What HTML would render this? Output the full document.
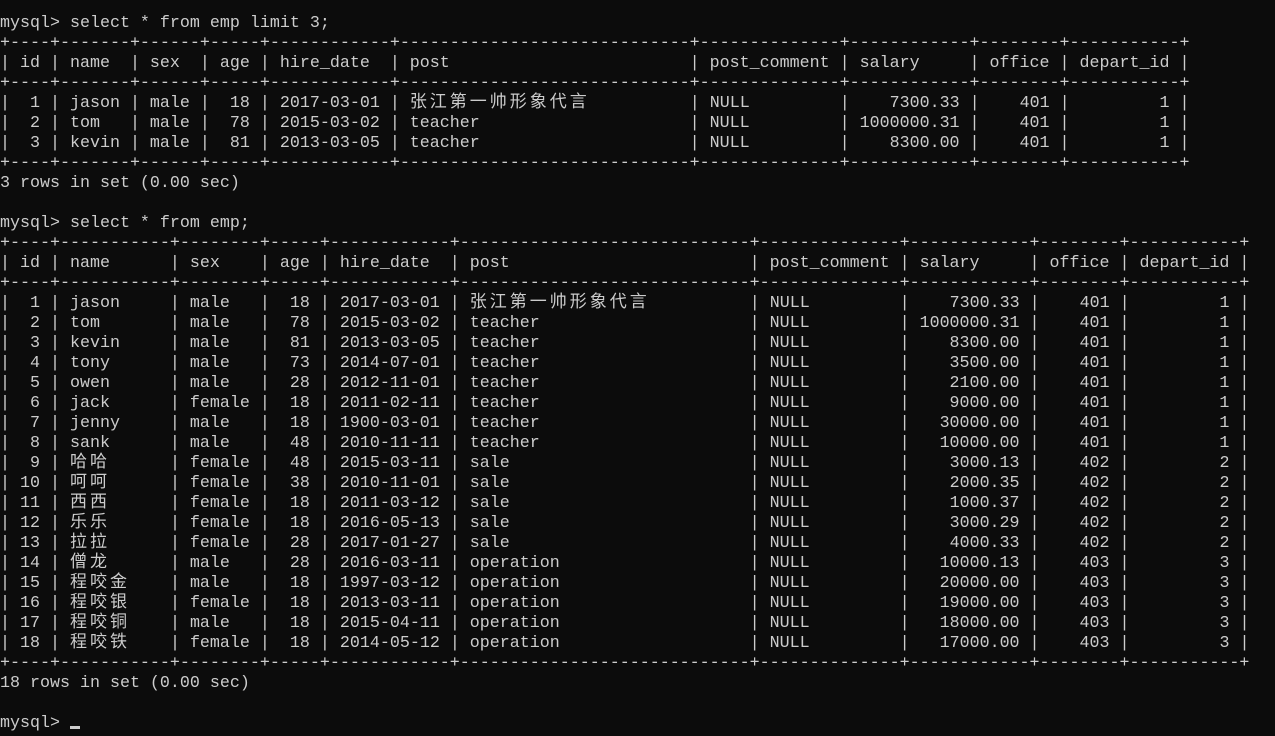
<!DOCTYPE html>
<html><head><meta charset="utf-8"><style>
html,body{margin:0;padding:0;background:#0c0c0c;width:1275px;height:736px;overflow:hidden}
pre{position:absolute;left:0;top:14px;margin:0;font-family:"Liberation Mono",monospace;font-size:16.67px;line-height:20px;color:#cccccc;white-space:pre}
.c{font-family:"Noto Sans CJK SC","WenQuanYi Zen Hei",sans-serif;font-size:17px;letter-spacing:3px;line-height:0;vertical-align:baseline}
#cur{position:absolute;left:70px;top:726px;width:10px;height:3px;background:#cccccc}
</style></head><body>
<pre>mysql&gt; select * from emp limit 3;
+----+-------+------+-----+------------+-----------------------------+--------------+------------+--------+-----------+
| id | name  | sex  | age | hire_date  | post                        | post_comment | salary     | office | depart_id |
+----+-------+------+-----+------------+-----------------------------+--------------+------------+--------+-----------+
|  1 | jason | male |  18 | 2017-03-01 | <span class="c">张江第一帅形象代言</span>          | NULL         |    7300.33 |    401 |         1 |
|  2 | tom   | male |  78 | 2015-03-02 | teacher                     | NULL         | 1000000.31 |    401 |         1 |
|  3 | kevin | male |  81 | 2013-03-05 | teacher                     | NULL         |    8300.00 |    401 |         1 |
+----+-------+------+-----+------------+-----------------------------+--------------+------------+--------+-----------+
3 rows in set (0.00 sec)

mysql&gt; select * from emp;
+----+-----------+--------+-----+------------+-----------------------------+--------------+------------+--------+-----------+
| id | name      | sex    | age | hire_date  | post                        | post_comment | salary     | office | depart_id |
+----+-----------+--------+-----+------------+-----------------------------+--------------+------------+--------+-----------+
|  1 | jason     | male   |  18 | 2017-03-01 | <span class="c">张江第一帅形象代言</span>          | NULL         |    7300.33 |    401 |         1 |
|  2 | tom       | male   |  78 | 2015-03-02 | teacher                     | NULL         | 1000000.31 |    401 |         1 |
|  3 | kevin     | male   |  81 | 2013-03-05 | teacher                     | NULL         |    8300.00 |    401 |         1 |
|  4 | tony      | male   |  73 | 2014-07-01 | teacher                     | NULL         |    3500.00 |    401 |         1 |
|  5 | owen      | male   |  28 | 2012-11-01 | teacher                     | NULL         |    2100.00 |    401 |         1 |
|  6 | jack      | female |  18 | 2011-02-11 | teacher                     | NULL         |    9000.00 |    401 |         1 |
|  7 | jenny     | male   |  18 | 1900-03-01 | teacher                     | NULL         |   30000.00 |    401 |         1 |
|  8 | sank      | male   |  48 | 2010-11-11 | teacher                     | NULL         |   10000.00 |    401 |         1 |
|  9 | <span class="c">哈哈</span>      | female |  48 | 2015-03-11 | sale                        | NULL         |    3000.13 |    402 |         2 |
| 10 | <span class="c">呵呵</span>      | female |  38 | 2010-11-01 | sale                        | NULL         |    2000.35 |    402 |         2 |
| 11 | <span class="c">西西</span>      | female |  18 | 2011-03-12 | sale                        | NULL         |    1000.37 |    402 |         2 |
| 12 | <span class="c">乐乐</span>      | female |  18 | 2016-05-13 | sale                        | NULL         |    3000.29 |    402 |         2 |
| 13 | <span class="c">拉拉</span>      | female |  28 | 2017-01-27 | sale                        | NULL         |    4000.33 |    402 |         2 |
| 14 | <span class="c">僧龙</span>      | male   |  28 | 2016-03-11 | operation                   | NULL         |   10000.13 |    403 |         3 |
| 15 | <span class="c">程咬金</span>    | male   |  18 | 1997-03-12 | operation                   | NULL         |   20000.00 |    403 |         3 |
| 16 | <span class="c">程咬银</span>    | female |  18 | 2013-03-11 | operation                   | NULL         |   19000.00 |    403 |         3 |
| 17 | <span class="c">程咬铜</span>    | male   |  18 | 2015-04-11 | operation                   | NULL         |   18000.00 |    403 |         3 |
| 18 | <span class="c">程咬铁</span>    | female |  18 | 2014-05-12 | operation                   | NULL         |   17000.00 |    403 |         3 |
+----+-----------+--------+-----+------------+-----------------------------+--------------+------------+--------+-----------+
18 rows in set (0.00 sec)

mysql&gt; </pre>
<div id="cur"></div>
</body></html>
